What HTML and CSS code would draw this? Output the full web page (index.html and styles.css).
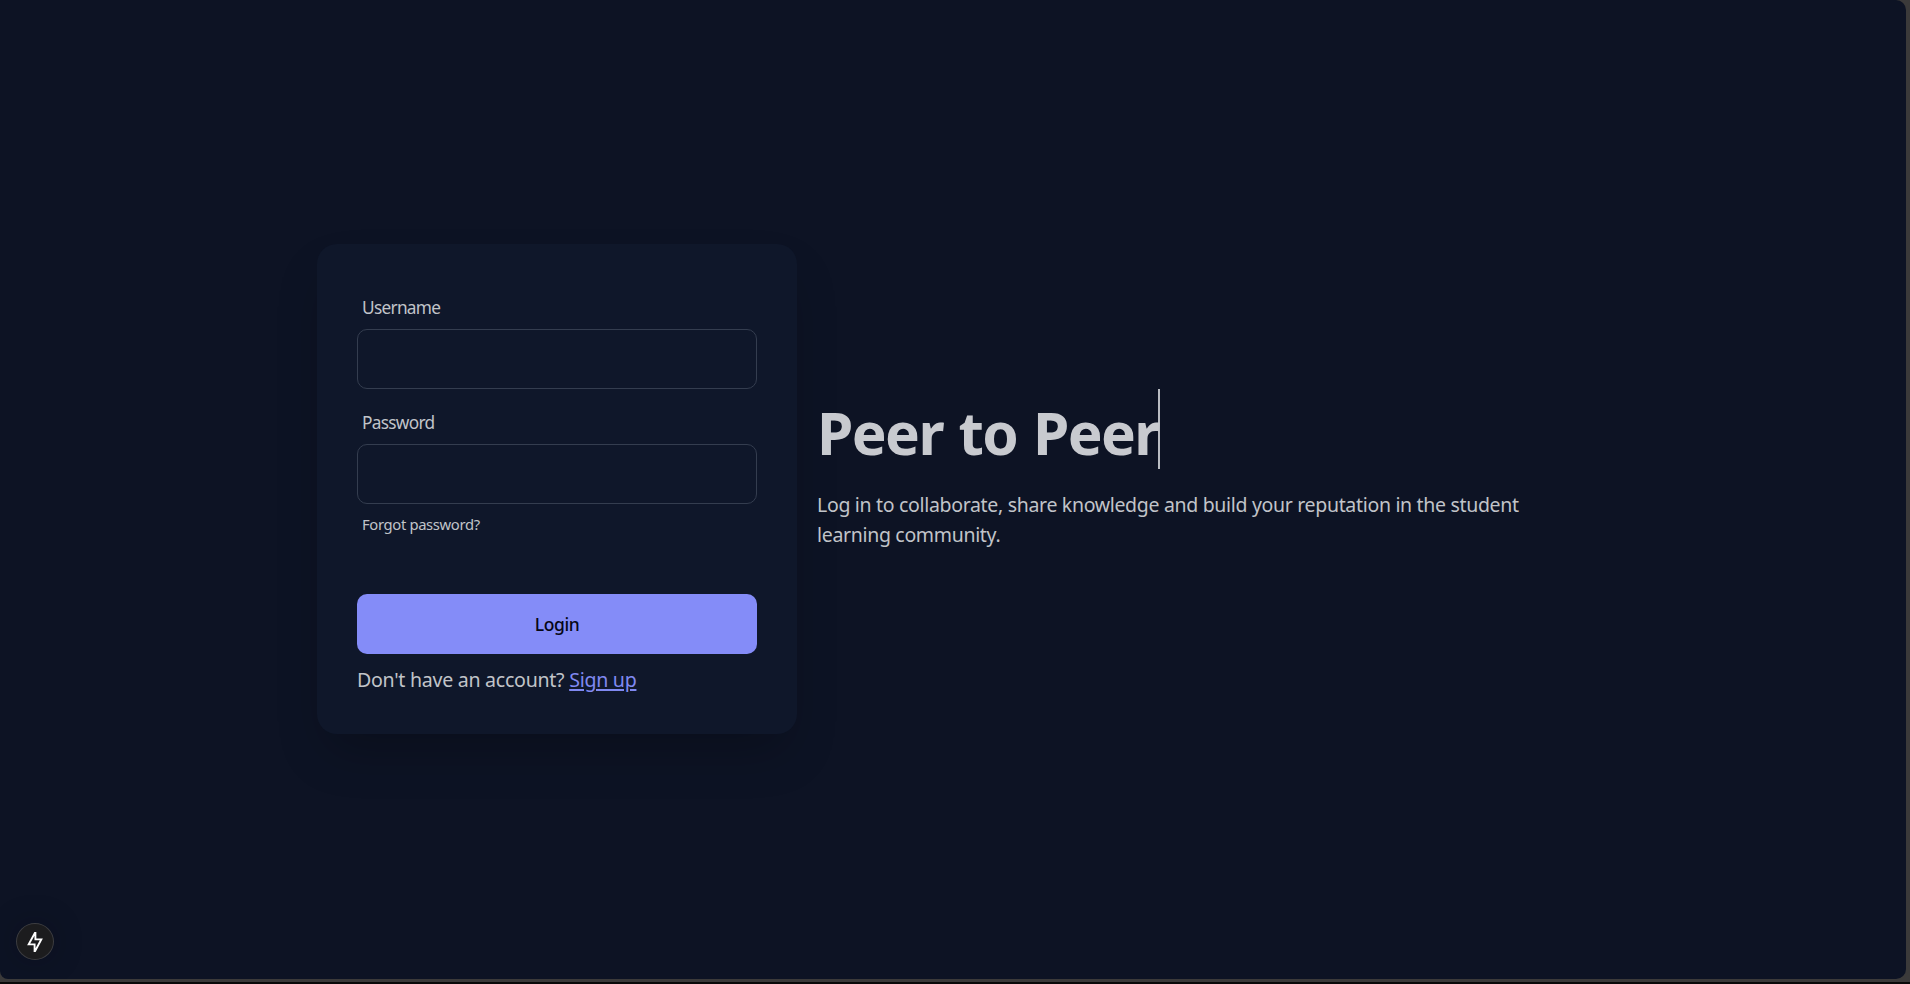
FILE: index.html
```html
<!DOCTYPE html>
<html lang="en">
<head>
<meta charset="utf-8">
<title>Peer to Peer</title>
<link rel="stylesheet" href="styles.css">
</head>
<body>
<div class="page">
  <main class="hero">
    <form class="card">
      <label class="label" for="user"><span>Username</span></label>
      <input class="input" id="user" type="text">
      <label class="label label-next" for="pass"><span>Password</span></label>
      <input class="input" id="pass" type="password">
      <div class="forgot"><span>Forgot password?</span></div>
      <button class="btn" type="button"><span>Login</span></button>
      <p class="signup"><span>Don't have an account?</span> <a href="#">Sign up</a></p>
    </form>
    <section class="intro">
      <h1 class="title">Peer to Peer</h1>
      <p class="lead">Log in to collaborate, share knowledge and build your reputation in the student<br>learning community.</p>
    </section>
  </main>
  <div class="badge">
    <svg width="16" height="20" viewBox="0 0 16 20" fill="none" stroke="#fff" stroke-width="1.9"><path d="M8.4 0V7.4H14.3L7.6 20V12.4H1.7Z"/></svg>
  </div>
</div>
</body>
</html>
```
FILE: styles.css
```css
* { box-sizing: border-box; }
html { background: #3b3a3a; }
body {
  margin: 0;
  height: 984px;
  overflow: hidden;
  border-bottom: 2px solid #090909;
  font-family: "Segoe UI", "Noto Sans", "Open Sans", sans-serif;
  font-size: 20px;
  color: #c1c4c9;
}
.page {
  position: relative;
  width: 1906px;
  height: 979px;
  display: flex;
  justify-content: center;
  background: #0d1324;
  border-radius: 0 10px 10px 8px;
  overflow: hidden;
}
.hero {
  width: 1272px;
  height: 978px;
  display: flex;
  align-items: center;
  gap: 20px;
}
.card {
  width: 480px;
  height: 490px;
  flex: none;
  padding: 40px;
  display: flex;
  flex-direction: column;
  background: #0f172a;
  border-radius: 20px;
  box-shadow: 0 25px 50px -12px rgba(0, 0, 0, .25);
}
.card > * { flex: none; }
.label {
  height: 45px;
  padding: 11px 5px 9px;
  font-size: 17.3px;
  line-height: 25px;
  letter-spacing: -.72px;
}
.label-next { height: 55px; padding-top: 21px; }
.input {
  width: 400px;
  height: 60px;
  padding: 0 20px;
  background: #0f172a;
  border: 1px solid #343d4f;
  border-radius: 10px;
  color: inherit;
  font: inherit;
}
.forgot {
  height: 90px;
  padding: 9px 5px;
  font-size: 14.8px;
  line-height: 22px;
  letter-spacing: -.35px;
}
.btn {
  height: 60px;
  padding: 0;
  border: 0;
  border-radius: 10px;
  background: #848cf8;
  color: #060715;
  font-family: inherit;
  font-size: 17.5px;
  font-weight: 500;
  line-height: 20px;
  letter-spacing: -.4px;
}
.signup { margin: 11px 0 0; font-size: 19.6px; line-height: 30px; letter-spacing: -.28px; white-space: nowrap; }
.signup a { color: #8089f1; text-underline-offset: 2px; text-decoration-thickness: 2px; }
.intro { width: 772px; margin-top: -40px; }
.title {
  width: 343px;
  height: 80px;
  margin: 0;
  border-right: 2px solid #b9bcc2;
  font-size: 58.5px;
  font-weight: 700;
  line-height: 86px;
  letter-spacing: -1.6px;
  word-spacing: 2px;
  color: #c8cacf;
  white-space: nowrap;
}
.lead { margin: 21px 0 0; font-size: 19.5px; line-height: 30px; letter-spacing: -.32px; white-space: nowrap; }
.badge {
  position: absolute;
  left: 16px;
  top: 923px;
  width: 38px;
  height: 37px;
  display: flex;
  align-items: center;
  justify-content: center;
  border: 1px solid #3c3c40;
  border-radius: 50%;
  background: #1c1c1e;
  box-shadow: 0 0 30px rgba(0, 10, 20, .25);
}
```
